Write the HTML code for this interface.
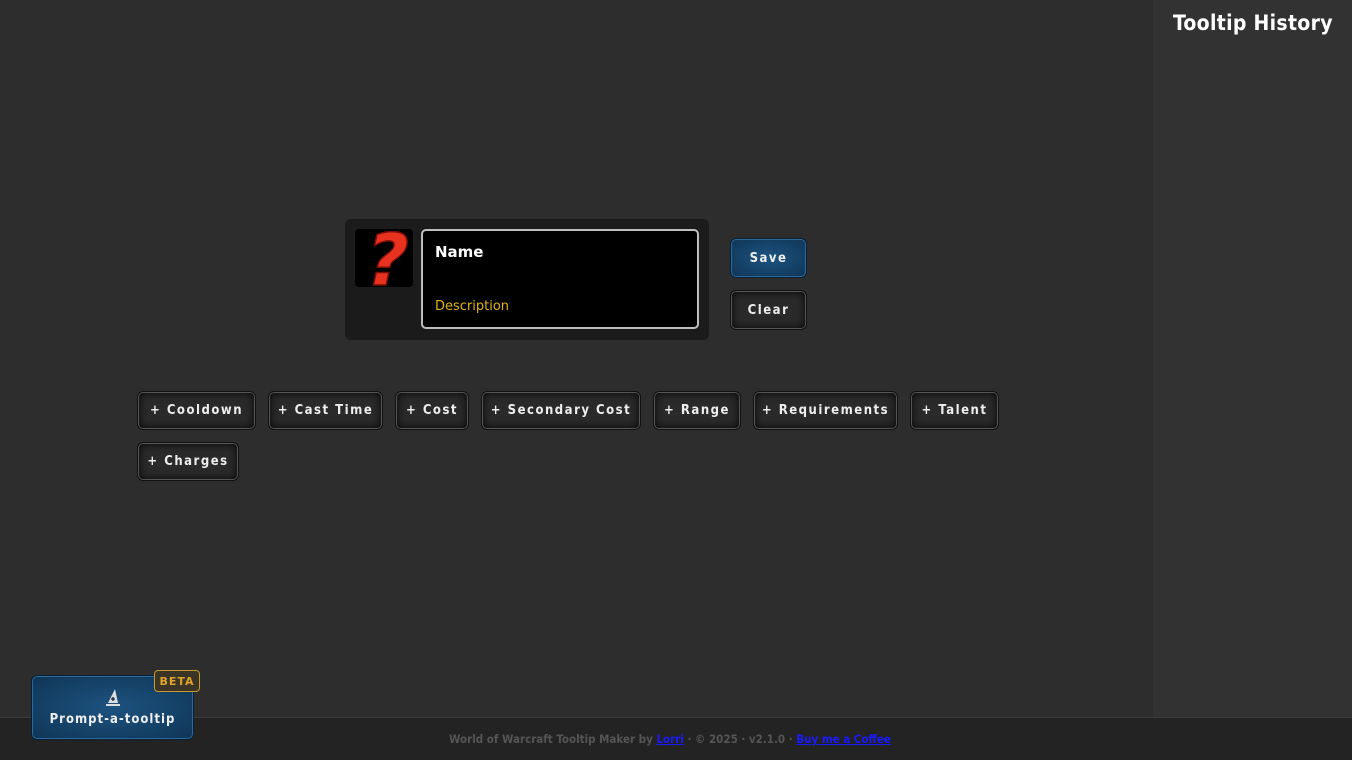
<!DOCTYPE html>
<html><head><meta charset="utf-8"><style>
*{box-sizing:border-box;margin:0;padding:0}
body{width:1352px;height:760px;background:#2d2d2d;position:relative;overflow:hidden;font-family:"DejaVu Sans","Liberation Sans",sans-serif}
.side{position:absolute;left:1153px;top:0;width:199px;height:717px;background:#323232}
.side h2{position:absolute;left:20px;top:11px;color:#fff;font-size:21px;font-weight:bold;letter-spacing:0.3px;font-family:"DejaVu Sans Condensed","DejaVu Sans",sans-serif}
.foot{position:absolute;left:0;top:717px;width:1352px;height:43px;background:#232323;border-top:1px solid #3a3a3a;color:#555;font-size:11.5px;font-weight:bold;font-family:"DejaVu Sans Condensed","DejaVu Sans",sans-serif}
.foot span{position:absolute;left:449px;top:14px}
.foot a{color:#1a1aff;text-decoration:underline}
.panel{position:absolute;left:345px;top:219px;width:364px;height:121px;background:#1b1b1b;border-radius:6px}
.icon{position:absolute;left:355px;top:229px;width:58px;height:58px;background:#000;border-radius:4px;overflow:hidden}
.tt{position:absolute;left:421px;top:229px;width:278px;height:100px;background:#000;border:2px solid #bdbdbd;border-radius:5px}
.tt b{position:absolute;left:12px;top:12px;color:#fff;font-size:15px}
.tt i{position:absolute;left:12px;top:68px;color:#e0b317;font-size:13px;font-style:normal}
.btn{position:absolute;height:39px;border:1px solid #111;box-shadow:inset 0 0 0 1px #555,inset 0 0 10px #000;border-radius:6px;background:#2a2a2a;color:#eee;font-weight:bold;font-size:13px;letter-spacing:1.5px;display:flex;align-items:center;justify-content:center;font-family:"DejaVu Sans Condensed","DejaVu Sans",sans-serif;white-space:nowrap}
.blue{background:radial-gradient(#1d5380,#0f3556);box-shadow:inset 0 0 0 1px #2c6a9e;border:1px solid #0a1f33}
.beta{position:absolute;left:154px;top:670px;width:46px;height:22px;border:1px solid #c89a2a;border-radius:4px;background:#3a3526;color:#e0a529;font-size:11px;font-weight:bold;display:flex;align-items:center;justify-content:center;letter-spacing:1px}
</style></head><body>
<div class="side"><h2>Tooltip History</h2></div>
<div class="panel"></div>
<div class="icon"><svg width="58" height="58"><text x="29" y="56" text-anchor="middle" font-size="72" font-weight="bold" fill="#e8321f" stroke="#7a0d05" stroke-width="1.5" font-family="DejaVu Sans,sans-serif" transform="skewX(-12) translate(10,0)">?</text></svg></div>
<div class="tt"><b>Name</b><i>Description</i></div>
<div class="btn blue" style="left:730px;top:238px;width:77px;height:40px">Save</div>
<div class="btn" style="left:730px;top:290px;width:77px;height:40px">Clear</div>
<div class="btn" style="left:137px;top:391px;width:119px">+ Cooldown</div>
<div class="btn" style="left:268px;top:391px;width:115px">+ Cast Time</div>
<div class="btn" style="left:395px;top:391px;width:74px">+ Cost</div>
<div class="btn" style="left:481px;top:391px;width:160px">+ Secondary Cost</div>
<div class="btn" style="left:653px;top:391px;width:88px">+ Range</div>
<div class="btn" style="left:753px;top:391px;width:145px">+ Requirements</div>
<div class="btn" style="left:910px;top:391px;width:89px">+ Talent</div>
<div class="btn" style="left:137px;top:442px;width:102px">+ Charges</div>
<div class="foot"><span>World of Warcraft Tooltip Maker by <a>Lorri</a> · © 2025 · v2.1.0 · <a>Buy me a Coffee</a></span></div>
<div class="btn blue" style="left:31px;top:675px;width:163px;height:65px;flex-direction:column;font-size:13px;letter-spacing:1px">
<svg width="20" height="20" viewBox="0 0 20 20"><path d="M12 1 L5 15 H15 Z" fill="#ddd"/><rect x="3" y="16" width="14" height="2" fill="#ddd"/><path d="M10 9v4M8 11h4" stroke="#123" stroke-width="1.3"/></svg>
<div style="margin-top:4px">Prompt-a-tooltip</div></div>
<div class="beta">BETA</div>
</body></html>
